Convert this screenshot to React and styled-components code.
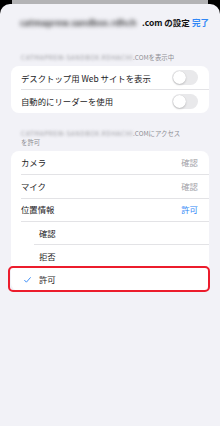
import styled, { createGlobalStyle } from "styled-components";

const GlobalStyle = createGlobalStyle`
  html, body {
    margin: 0;
    padding: 0;
    background: #000;
  }
  body {
    font-family: "Noto Sans CJK JP", "Noto Sans", sans-serif;
    -webkit-font-smoothing: antialiased;
  }
`;

const Page = styled.div`
  width: 220px;
  height: 426px;
  overflow: hidden;
  background: #000;
  display: flex;
  flex-direction: column;
`;

const BackCard = styled.div`
  height: 4px;
  margin: 0 12px;
  background: #b3b3b5;
  flex-shrink: 0;
`;

const Sheet = styled.div`
  flex: 1;
  background: #f2f2f7;
  border-radius: 10px 10px 0 0;
  display: flex;
  flex-direction: column;
`;

const NavBar = styled.div`
  height: 36px;
  display: flex;
  align-items: center;
  padding: 0 11px 0 20px;
`;

const Title = styled.div`
  flex: 1;
  min-width: 0;
  font-size: 8.5px;
  font-weight: 600;
  color: #111;
  white-space: nowrap;
  display: flex;
  align-items: center;
`;

const Blurred = styled.span`
  display: inline-block;
  flex-shrink: 0;
  width: ${(p) => p.$width}px;
  white-space: nowrap;
  filter: blur(${(p) => p.$blur || 2}px);
  color: ${(p) => p.$color || "#555"};
  letter-spacing: ${(p) => p.$spacing || 0}px;
`;

const Done = styled.span`
  flex-shrink: 0;
  font-size: 8.5px;
  font-weight: 600;
  color: #2f86f6;
`;

const SectionHeader = styled.div`
  padding: ${(p) => p.$top}px 20px 4px 21px;
  font-size: 6.4px;
  line-height: 9px;
  color: #8e8e93;
`;

const HeaderLine = styled.div`
  display: flex;
  align-items: center;
  white-space: nowrap;
`;

const Group = styled.div`
  margin: 0 11px;
  background: #fff;
  border-radius: 8px;
  display: flex;
  flex-direction: column;
`;

const Row = styled.div`
  position: relative;
  height: 23.4px;
  display: flex;
  align-items: center;
  padding: 0 11px 0 ${(p) => p.$indent}px;
  font-size: 8.4px;
  color: #1c1c1e;

  &::before {
    content: "";
    display: ${(p) => (p.$first ? "none" : "block")};
    position: absolute;
    top: 0;
    right: 0;
    left: ${(p) => p.$lineFrom}px;
    height: 0.6px;
    background: #e3e3e6;
  }
`;

const Label = styled.span`
  flex: 1;
`;

const Value = styled.span`
  font-size: 8.4px;
  color: ${(p) => (p.$active ? "#2f86f6" : "#a3a3a8")};
`;

const Highlight = styled.div`
  position: absolute;
  left: -3px;
  right: -1px;
  top: -1.5px;
  bottom: -1px;
  border: 2px solid #ec1c2c;
  border-radius: 5px;
  pointer-events: none;
`;

const Check = styled.svg`
  position: absolute;
  left: 13px;
  top: 9px;
`;

const Toggle = styled.div`
  width: 26px;
  height: 15px;
  border-radius: 8px;
  background: #e9e9eb;
  display: flex;
  align-items: center;
  padding: 1px;
  box-sizing: border-box;
`;

const Knob = styled.div`
  width: 13px;
  height: 13px;
  border-radius: 50%;
  background: #fff;
  box-shadow: 0 1px 2px rgba(0, 0, 0, 0.18), 0 0 0.5px rgba(0, 0, 0, 0.2);
`;

const permissions = [
  { label: "カメラ", value: "確認" },
  { label: "マイク", value: "確認" },
  { label: "位置情報", value: "許可", active: true },
];

export default function App() {
  return (
    <Page>
      <GlobalStyle />
      <BackCard />
      <Sheet>
        <NavBar>
          <Title>
            <Blurred $width={122} $color="#3a3a3c" $spacing={0.2}>
              catmaprew.sandbox.rdhch
            </Blurred>
            .com の設定
          </Title>
          <Done>完了</Done>
        </NavBar>

        <SectionHeader $top={13}>
          <HeaderLine>
            <Blurred $width={112} $color="#9a9a9f" $spacing={0.55} $blur={1.6}>
              CATMAPREW-SANDBOX.RDHACHI
            </Blurred>
            .COMを表示中
          </HeaderLine>
        </SectionHeader>

        <Group>
          <Row $indent={10} $first>
            <Label>デスクトップ用 Web サイトを表示</Label>
            <Toggle>
              <Knob />
            </Toggle>
          </Row>
          <Row $indent={10} $lineFrom={10}>
            <Label>自動的にリーダーを使用</Label>
            <Toggle>
              <Knob />
            </Toggle>
          </Row>
        </Group>

        <SectionHeader $top={16}>
          <HeaderLine>
            <Blurred $width={112} $color="#9a9a9f" $spacing={0.55} $blur={1.6}>
              CATMAPREW-SANDBOX.RDHACHI
            </Blurred>
            .COMにアクセス
          </HeaderLine>
          <HeaderLine>を許可</HeaderLine>
        </SectionHeader>

        <Group>
          {permissions.map((p, i) => (
            <Row key={p.label} $indent={10} $lineFrom={10} $first={i === 0}>
              <Label>{p.label}</Label>
              <Value $active={p.active}>{p.value}</Value>
            </Row>
          ))}
          <Row $indent={28} $lineFrom={10}>
            <Label>確認</Label>
          </Row>
          <Row $indent={28} $lineFrom={23}>
            <Label>拒否</Label>
          </Row>
          <Row $indent={28} $first>
            <Check width="7" height="6" viewBox="0 0 7 6">
              <path
                d="M0.6 3.3 L2.4 5.2 L6.4 0.6"
                fill="none"
                stroke="#2f86f6"
                strokeWidth="0.9"
                strokeLinecap="round"
                strokeLinejoin="round"
              />
            </Check>
            <Label>許可</Label>
            <Highlight />
          </Row>
        </Group>
      </Sheet>
    </Page>
  );
}
